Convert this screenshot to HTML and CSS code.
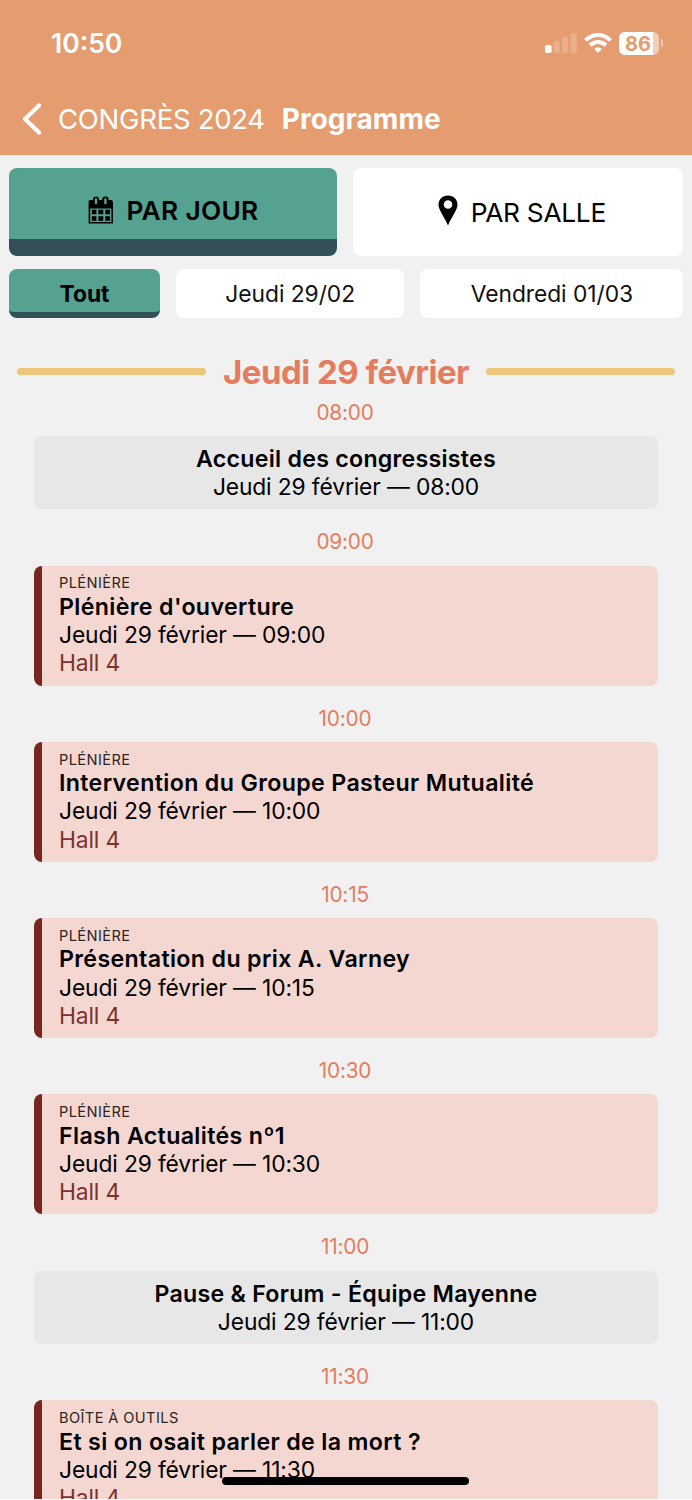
FILE: index.html
```html
<!DOCTYPE html>
<html lang="fr">
<head>
    <meta charset="UTF-8">
    <meta name="viewport" content="width=device-width, initial-scale=1.0">
    <title>Programme</title>
    <link rel="stylesheet" href="styles.css">
</head>
<body>
    <div class="app">
        <header>
            <div class="status-bar">
                <span class="clock">10:50</span>
                <div class="status-icons">
                    <svg class="signal" width="32" height="20" viewBox="0 0 32 20" fill="#fff">
                        <rect x="0" y="12" width="6.6" height="8" rx="1.8"/>
                        <rect x="8.6" y="8" width="6.2" height="12" rx="1.8" opacity=".2"/>
                        <rect x="17" y="4" width="6.2" height="16" rx="1.8" opacity=".2"/>
                        <rect x="25.6" y="0" width="6.2" height="20" rx="1.8" opacity=".2"/>
                    </svg>
                    <svg class="wifi" width="28" height="20" viewBox="0 0 28 20">
                        <g fill="none" stroke="#fff" stroke-width="4">
                            <path d="M1.6 7.4Q7 2 14 2T26.4 7.4"/>
                            <path d="M6.1 12.2Q9.6 9 14 9T21.9 12.2"/>
                        </g>
                        <path d="M14 20l-3.8-4q1.6-1.7 3.8-1.7t3.8 1.7z" fill="#fff"/>
                    </svg>
                    <div class="battery">
                        <div class="battery-level">86</div>
                    </div>
                    <span class="battery-tip"></span>
                </div>
            </div>
            <nav class="title-bar">
                <svg width="20" height="32" viewBox="0 0 20 32" fill="none" stroke="#fff" stroke-width="4.2" stroke-linecap="round" stroke-linejoin="round">
                    <path d="M18 2.4L4 16L18 29.6"/>
                </svg>
                <span class="back-label">CONGRÈS 2024</span>
                <h1>Programme</h1>
            </nav>
        </header>

        <main>
            <div class="tabs">
                <button class="tab active">
                    <svg width="26" height="28" viewBox="0 0 26 28">
                        <path fill="#000" fill-rule="evenodd" d="M2 4H5Q5 .6 8 .6T11 4H14Q14 .6 17.500 .6T20.500 4H23Q25 4.500 25 6V27.500H.6V6Q.6 4.500 2 4ZM2.200 12.500V26H23.400V12.500ZM6.800 3.500V7Q6.800 8.400 8 8.400T9.200 7V3.500Q9.200 2.200 8 2.200T6.800 3.500ZM16.200 3.500V7Q16.200 8.400 17.400 8.400T18.600 7V3.500Q18.600 2.200 17.400 2.200T16.200 3.500Z"/>
                        <g fill="#000">
                            <rect x="3.800" y="13.700" width="4.600" height="4.600"/>
                            <rect x="10.400" y="13.700" width="4.900" height="4.600"/>
                            <rect x="17.300" y="13.700" width="4.600" height="4.600"/>
                            <rect x="3.800" y="20.200" width="4.600" height="4.600"/>
                            <rect x="10.400" y="20.200" width="4.900" height="4.600"/>
                            <rect x="17.300" y="20.200" width="4.600" height="4.600"/>
                        </g>
                    </svg>
                    <span>PAR JOUR</span>
                </button>
                <button class="tab">
                    <svg class="pin" width="20" height="31" viewBox="0 0 20 31">
                        <path fill="#000" fill-rule="evenodd" d="M10 .5C15.500 .5 19.500 4.400 19.500 9.500C19.500 15 14 21 10 30.500C6 21 .5 15 .5 9.500C.5 4.400 4.500 .5 10 .5ZM10 5.200A4.300 4.300 0 1 0 10 13.800A4.300 4.300 0 1 0 10 5.200Z"/>
                    </svg>
                    <span>PAR SALLE</span>
                </button>
            </div>
            <div class="days">
                <button class="day active">Tout</button>
                <button class="day">Jeudi 29/02</button>
                <button class="day">Vendredi 01/03</button>
            </div>

            <h2>Jeudi 29 février</h2>

            <div class="time">08:00</div>
            <div class="event break">
                <h3>Accueil des congressistes</h3>
                <p>Jeudi 29 février — 08:00</p>
            </div>

            <div class="time">09:00</div>
            <div class="event session">
                <small>PLÉNIÈRE</small>
                <h3>Plénière d'ouverture</h3>
                <p>Jeudi 29 février — 09:00</p>
                <p class="room">Hall 4</p>
            </div>

            <div class="time">10:00</div>
            <div class="event session">
                <small>PLÉNIÈRE</small>
                <h3>Intervention du Groupe Pasteur Mutualité</h3>
                <p>Jeudi 29 février — 10:00</p>
                <p class="room">Hall 4</p>
            </div>

            <div class="time">10:15</div>
            <div class="event session">
                <small>PLÉNIÈRE</small>
                <h3>Présentation du prix A. Varney</h3>
                <p>Jeudi 29 février — 10:15</p>
                <p class="room">Hall 4</p>
            </div>

            <div class="time">10:30</div>
            <div class="event session">
                <small>PLÉNIÈRE</small>
                <h3>Flash Actualités nº1</h3>
                <p>Jeudi 29 février — 10:30</p>
                <p class="room">Hall 4</p>
            </div>

            <div class="time">11:00</div>
            <div class="event break">
                <h3>Pause &amp; Forum - Équipe Mayenne</h3>
                <p>Jeudi 29 février — 11:00</p>
            </div>

            <div class="time">11:30</div>
            <div class="event session">
                <small>BOÎTE À OUTILS</small>
                <h3>Et si on osait parler de la mort ?</h3>
                <p>Jeudi 29 février — 11:30</p>
                <p class="room">Hall 4</p>
            </div>
        </main>
        <div class="home-bar"></div>
    </div>
</body>
</html>
```
FILE: styles.css
```css
* {
    box-sizing: border-box;
}

body {
    margin: 0;
    background-color: #fff;
    font-family: 'Inter', 'Liberation Sans', sans-serif;
    color: #000;
    height: 1500px;
    overflow: hidden;
}

.app {
    position: relative;
    height: 1498.5px;
    overflow: hidden;
    background-color: #f1f1f1;
}

header {
    height: 155px;
    background-color: #e59c6f;
    color: #fff;
}

.status-bar {
    display: flex;
    justify-content: space-between;
    height: 86px;
    align-items: center;
    padding: 0 29px 0 51px;
}

.clock {
    font-size: 26.5px;
    font-weight: 600;
}

.status-icons {
    display: flex;
    align-items: center;
}

.wifi {
    margin: 0 7px 0 7px;
}

.battery {
    width: 40px;
    height: 23px;
    border-radius: 6px;
    overflow: hidden;
    background-color: #f2ceb7;
}

.battery-level {
    width: 34px;
    height: 23px;
    padding-left: 5px;
    background-color: #fff;
    color: #e59c6f;
    font-size: 20px;
    font-weight: 700;
    line-height: 24px;
    text-align: center;
}

.battery-tip {
    width: 2.5px;
    height: 8px;
    margin-left: 2px;
    border-radius: 0 4px 4px 0;
    background-color: #f2ceb7;
}

.title-bar {
    display: flex;
    align-items: center;
    height: 65px;
    padding-left: 21px;
}

.back-label {
    margin-left: 17px;
    font-size: 27.5px;
    font-weight: 400;
    letter-spacing: -0.28px;
}

h1 {
    margin: 0 0 0 17px;
    font-size: 28px;
    font-weight: 700;
}

.tabs {
    display: grid;
    grid-template-columns: 328px 330px;
    gap: 16.3px;
    padding: 13.3px 9px 0;
}

.tab {
    display: flex;
    justify-content: center;
    align-items: center;
    gap: 13px;
    height: 87.5px;
    padding: 0;
    border: none;
    border-radius: 8px;
    background-color: #fff;
    color: #000;
    font-family: inherit;
    font-size: 26.3px;
    font-weight: 400;
    letter-spacing: -0.3px;
}

.tab .pin {
    margin: -3px 0 0 7px;
}

.tab.active {
    gap: 12px;
    padding: 13px 0 0 1px;
    border-bottom: 17px solid #335058;
    background-color: #55a290;
    font-weight: 600;
    letter-spacing: 0.3px;
}

.days {
    display: grid;
    grid-template-columns: 151px 228px 263px;
    gap: 16.2px;
    padding: 13.5px 9px 0;
}

.day {
    height: 48.5px;
    padding: 0;
    border: none;
    border-radius: 8px;
    background-color: #fff;
    color: #111;
    font-family: inherit;
    font-size: 22.8px;
    font-weight: 400;
    letter-spacing: -0.05px;
}

.day.active {
    padding-top: 6px;
    border-bottom: 6px solid #335058;
    background-color: #55a290;
    color: #000;
    font-weight: 700;
}

h2 {
    display: flex;
    align-items: center;
    gap: 17px;
    height: 40px;
    margin: 34px 17px 0;
    color: #e47d60;
    font-size: 33px;
    font-weight: 700;
    letter-spacing: -0.5px;
    white-space: nowrap;
}

/* yellow rule on each side of the day */
h2::before,
h2::after {
    content: "";
    flex: 1;
    height: 7px;
    margin-top: -1px;
    border-radius: 4px;
    background-color: #ebc67b;
}

.time {
    margin: 19px 0 9.33px;
    height: 28px;
    padding-right: 2px;
    color: #e47d60;
    font-size: 20.8px;
    font-weight: 400;
    letter-spacing: -0.2px;
    line-height: 28px;
    text-align: center;
}

h2 + .time {
    margin-top: 6.87px;
}

.event {
    margin: 0 34px;
    padding: 8.8px 17px 7.8px;
    border-radius: 8px;
}

.event h3,
.event p {
    margin: 0;
    line-height: 28.35px;
}

.event h3 {
    font-size: 23.2px;
    font-weight: 600;
    letter-spacing: 0.35px;
}

.event p {
    font-size: 22.8px;
    font-weight: 400;
    letter-spacing: -0.13px;
}

.event.break h3 {
    letter-spacing: 0.25px;
}

.break {
    background-color: #e7e7e7;
    text-align: center;
}

.session {
    border-left: 8px solid #76281f;
    background-color: #f5d7d1;
}

.session small {
    display: block;
    font-size: 14.6px;
    font-weight: 400;
    color: #2b2524;
    letter-spacing: 0.4px;
    line-height: 18.35px;
}

.event .room {
    color: #7b332b;
}

.home-bar {
    position: absolute;
    left: 222px;
    bottom: 13.5px;
    width: 247px;
    height: 8px;
    border-radius: 4px;
    background-color: #000;
}
```
